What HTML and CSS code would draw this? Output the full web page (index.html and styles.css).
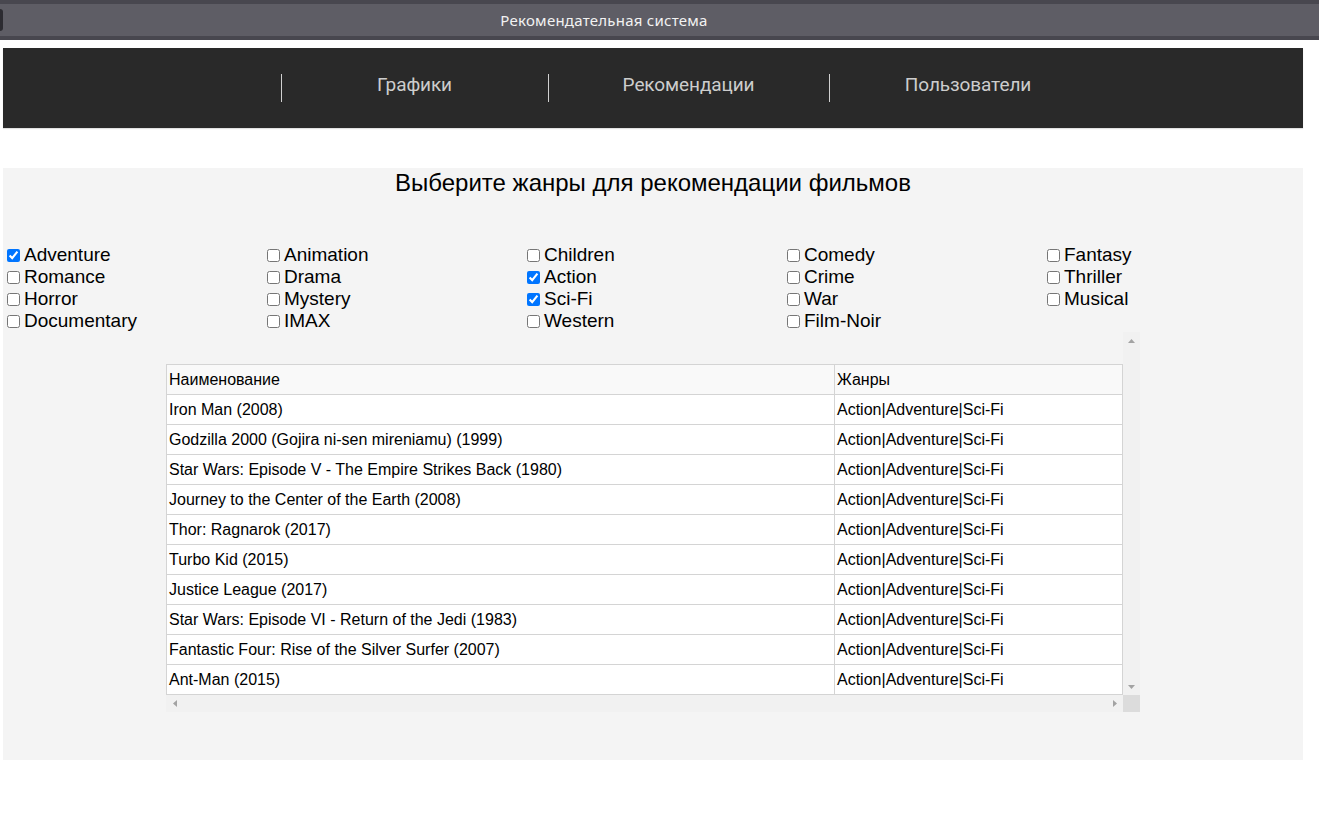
FILE: index.html
```html
<!DOCTYPE html>
<html lang="ru">
<head>
<meta charset="utf-8">
<title>Рекомендательная система</title>
<link rel="stylesheet" href="styles.css">
</head>
<body>
<header class="titlebar">
  <span class="titlebar-pill"></span>
  <span class="titlebar-title">Рекомендательная система</span>
</header>
<nav class="nav">
  <a class="nav-item nav-item-1" href="#"><span class="nav-sep"></span><span class="nav-label">Графики</span></a>
  <a class="nav-item nav-item-2" href="#"><span class="nav-sep"></span><span class="nav-label">Рекомендации</span></a>
  <a class="nav-item nav-item-3" href="#"><span class="nav-sep"></span><span class="nav-label">Пользователи</span></a>
</nav>
<main class="panel">
  <h2 class="panel-title">Выберите жанры для рекомендации фильмов</h2>
  <div class="genres">
    <label class="genre"><input type="checkbox" checked>Adventure</label>
    <label class="genre"><input type="checkbox">Animation</label>
    <label class="genre"><input type="checkbox">Children</label>
    <label class="genre"><input type="checkbox">Comedy</label>
    <label class="genre"><input type="checkbox">Fantasy</label>
    <label class="genre"><input type="checkbox">Romance</label>
    <label class="genre"><input type="checkbox">Drama</label>
    <label class="genre"><input type="checkbox" checked>Action</label>
    <label class="genre"><input type="checkbox">Crime</label>
    <label class="genre"><input type="checkbox">Thriller</label>
    <label class="genre"><input type="checkbox">Horror</label>
    <label class="genre"><input type="checkbox">Mystery</label>
    <label class="genre"><input type="checkbox" checked>Sci-Fi</label>
    <label class="genre"><input type="checkbox">War</label>
    <label class="genre"><input type="checkbox">Musical</label>
    <label class="genre"><input type="checkbox">Documentary</label>
    <label class="genre"><input type="checkbox">IMAX</label>
    <label class="genre"><input type="checkbox">Western</label>
    <label class="genre"><input type="checkbox">Film-Noir</label>
  </div>
  <div class="table-frame">
    <div class="table-view">
      <table class="movies">
        <thead>
          <tr><th class="col-name">Наименование</th><th class="col-genres">Жанры</th></tr>
        </thead>
        <tbody>
          <tr><td>Iron Man (2008)</td><td>Action|Adventure|Sci-Fi</td></tr>
          <tr><td>Godzilla 2000 (Gojira ni-sen mireniamu) (1999)</td><td>Action|Adventure|Sci-Fi</td></tr>
          <tr><td>Star Wars: Episode V - The Empire Strikes Back (1980)</td><td>Action|Adventure|Sci-Fi</td></tr>
          <tr><td>Journey to the Center of the Earth (2008)</td><td>Action|Adventure|Sci-Fi</td></tr>
          <tr><td>Thor: Ragnarok (2017)</td><td>Action|Adventure|Sci-Fi</td></tr>
          <tr><td>Turbo Kid (2015)</td><td>Action|Adventure|Sci-Fi</td></tr>
          <tr><td>Justice League (2017)</td><td>Action|Adventure|Sci-Fi</td></tr>
          <tr><td>Star Wars: Episode VI - Return of the Jedi (1983)</td><td>Action|Adventure|Sci-Fi</td></tr>
          <tr><td>Fantastic Four: Rise of the Silver Surfer (2007)</td><td>Action|Adventure|Sci-Fi</td></tr>
          <tr><td>Ant-Man (2015)</td><td>Action|Adventure|Sci-Fi</td></tr>
        </tbody>
      </table>
    </div>
    <div class="vscroll">
      <span class="sb-btn"><svg width="7" height="4" viewBox="0 0 7 4"><polygon points="0,4 7,4 3.5,0" fill="#a3a3a3"/></svg></span>
      <span class="sb-btn"><svg width="7" height="4" viewBox="0 0 7 4"><polygon points="0,0 7,0 3.5,4" fill="#a3a3a3"/></svg></span>
    </div>
    <div class="hscroll">
      <span class="sb-btn"><svg width="4" height="7" viewBox="0 0 4 7"><polygon points="4,0 4,7 0,3.5" fill="#a3a3a3"/></svg></span>
      <span class="sb-btn"><svg width="4" height="7" viewBox="0 0 4 7"><polygon points="0,0 0,7 4,3.5" fill="#a3a3a3"/></svg></span>
    </div>
    <div class="sb-corner"></div>
  </div>
</main>
</body>
</html>
```

FILE: styles.css
```css
html, body {
  margin: 0;
  padding: 0;
  background: #ffffff;
}

body {
  font-family: "Liberation Sans", Arial, sans-serif;
  color: #000;
}

/* window title bar */
.titlebar {
  display: flex;
  align-items: center;
  height: 32px;
  background: #5e5d65;
  border-top: 4px solid #48474f;
  border-bottom: 4px solid #48474f;
}

.titlebar-pill {
  width: 3px;
  height: 22px;
  background: #2c2b31;
  border-radius: 0 3px 3px 0;
}

.titlebar-title {
  flex: 1;
  padding-right: 114px;
  text-align: center;
  font-family: "Noto Sans", "Open Sans", sans-serif;
  font-size: 15px;
  letter-spacing: 0.25px;
  color: #f2f2f2;
}

/* navigation */
.nav {
  display: flex;
  width: 1300px;
  height: 80px;
  margin: 8px 0 0 3px;
  padding-left: 278px;
  box-sizing: border-box;
  background: #292929;
  box-shadow: 0 1px 1px rgba(0, 0, 0, 0.12);
}

.nav-item {
  position: relative;
  display: flex;
  align-items: center;
  justify-content: center;
  color: #cdcdcd;
  text-decoration: none;
  font-family: Roboto, "Liberation Sans", sans-serif;
  font-size: 19px;
  letter-spacing: -0.1px;
}

.nav-label {
  padding-bottom: 8px;
}

.nav-item-1 { width: 267px; }
.nav-item-2 { width: 281px; }
.nav-item-3 { width: 278px; }

.nav-sep {
  position: absolute;
  left: 0;
  top: 26px;
  width: 1px;
  height: 28px;
  background: #d0d0d0;
}

/* main panel */
.panel {
  width: 1300px;
  margin: 40px 0 0 3px;
  padding-bottom: 48px;
  background: #f4f4f4;
}

.panel-title {
  margin: 0;
  font-size: 24px;
  font-weight: normal;
  line-height: 30px;
  text-align: center;
}

.genres {
  display: grid;
  grid-template-columns: repeat(5, 1fr);
  margin-top: 46px;
  font-size: 19px;
  line-height: 22px;
}

.genre {
  display: flex;
  align-items: center;
  height: 22px;
  white-space: nowrap;
}

.genre input {
  width: 13px;
  height: 13px;
  margin: 0 4px 0 4px;
}

/* table with scrollbars */
.table-frame {
  display: grid;
  grid-template-columns: 957px 17px;
  grid-template-rows: 363px 17px;
  width: 974px;
  margin: 0 auto;
}

.table-view {
  overflow: hidden;
  padding-top: 32px;
}

.vscroll,
.hscroll {
  display: flex;
  justify-content: space-between;
  background: #f1f1f1;
}

.vscroll {
  flex-direction: column;
}

.sb-btn {
  display: flex;
  align-items: center;
  justify-content: center;
  width: 17px;
  height: 17px;
}

.sb-corner {
  background: #dcdcdc;
}

.movies {
  width: 957px;
  border-collapse: collapse;
  font-size: 16px;
  background: #fff;
}

.movies th,
.movies td {
  padding: 0 2px;
  height: 29px;
  line-height: 29px;
  border: 1px solid #d4d4d4;
  text-align: left;
  font-weight: normal;
  white-space: nowrap;
}

.movies thead th {
  background: #f9f9f9;
}

.col-name { width: 663px; }
```
